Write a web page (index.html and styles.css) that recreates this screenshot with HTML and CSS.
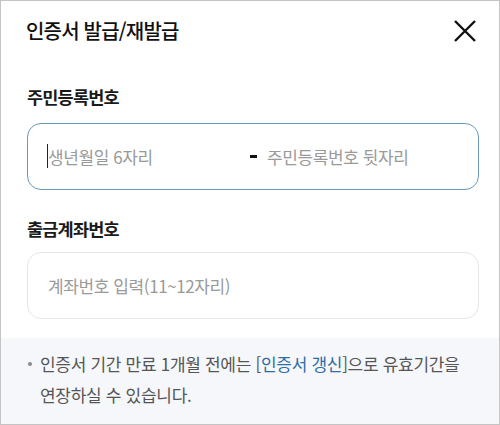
FILE: index.html
```html
<!DOCTYPE html>
<html lang="ko">
<head>
    <meta charset="UTF-8">
    <meta name="viewport" content="width=device-width, initial-scale=1.0">
    <title>인증서 발급/재발급</title>
    <link rel="stylesheet" href="styles.css">
</head>
<body>
    <div class="sheet">
        <div class="head">
            <h1 class="title">인증서 발급/재발급</h1>
            <button class="close" type="button" aria-label="닫기">
                <svg width="24" height="24" viewBox="0 0 24 24">
                    <path d="M2 2 L22 22 M22 2 L2 22" stroke="#111" stroke-width="2.4" fill="none"/>
                </svg>
            </button>
        </div>
        <div class="form">
            <label class="field-label">주민등록번호</label>
            <div class="field active">
                <span class="caret"></span>
                <input class="birth" type="text" placeholder="생년월일 6자리">
                <span class="dash"></span>
                <input class="back" type="text" placeholder="주민등록번호 뒷자리">
            </div>
            <label class="field-label second">출금계좌번호</label>
            <div class="field">
                <input type="text" placeholder="계좌번호 입력(11~12자리)">
            </div>
        </div>
        <ul class="notice">
            <li>인증서 기간 만료 1개월 전에는 [<a href="#">인증서 갱신</a>]으로 유효기간을 연장하실 수 있습니다.</li>
        </ul>
    </div>
</body>
</html>
```

FILE: styles.css
```css
* {
    box-sizing: border-box;
}
body {
    margin: 0;
    font-family: "Noto Sans CJK KR", "Noto Sans", sans-serif;
    color: #111;
    background: #fff;
}
.sheet {
    width: 500px;
    height: 425px;
    border: 1px solid #c4c4c4;
    display: flex;
    flex-direction: column;
    overflow: hidden;
}
.head {
    height: 60px;
    display: flex;
    align-items: center;
    justify-content: space-between;
    padding: 0 22px 0 25px;
}
.title {
    margin: 0;
    font-size: 20px;
    line-height: 24px;
    font-weight: 500;
    letter-spacing: -0.8px;
}
.close {
    border: 0;
    background: none;
    padding: 0;
    width: 24px;
    height: 24px;
    display: flex;
}
.form {
    padding: 0 20px 0 26px;
}
.field-label {
    display: block;
    margin: 24px 0 14px;
    font-size: 17.5px;
    line-height: 24px;
    font-weight: 700;
    letter-spacing: -0.8px;
    color: #1a1a1a;
}
.field-label.second {
    margin: 27px 0 11px;
}
.field {
    position: relative;
    height: 67px;
    border: 1px solid #e6e6e6;
    border-radius: 14px;
    display: flex;
    align-items: center;
    padding: 0 20px;
}
.field.active {
    border-color: #6a98b8;
}
.field input {
    border: 0;
    outline: none;
    background: none;
    padding: 0;
    font-family: inherit;
    font-size: 17px;
    letter-spacing: -0.4px;
    color: #111;
    width: 100%;
}
.field input::placeholder {
    color: #9a9a9a;
}
.field .birth {
    width: 202px;
    flex-shrink: 0;
}
.field .back {
    width: auto;
    flex: 1;
    min-width: 0;
}
.dash {
    flex-shrink: 0;
    width: 7px;
    height: 3px;
    background: #111;
    margin-right: 10px;
}
.caret {
    position: absolute;
    left: 19px;
    top: 20px;
    width: 1px;
    height: 24px;
    background: #222;
}
.notice {
    list-style: none;
    margin: auto 0 0;
    height: 86px;
    padding: 10px 20px 0 39px;
    background: #f5f7fa;
    font-size: 17px;
    line-height: 31px;
    letter-spacing: -0.3px;
    color: #555;
    word-break: keep-all;
}
.notice li {
    position: relative;
}
.notice li::before {
    content: "";
    position: absolute;
    left: -12px;
    top: 14px;
    width: 4px;
    height: 4px;
    border-radius: 50%;
    background: #8a8a8a;
}
.notice a {
    color: #2c6ea5;
    text-decoration: none;
}
```
